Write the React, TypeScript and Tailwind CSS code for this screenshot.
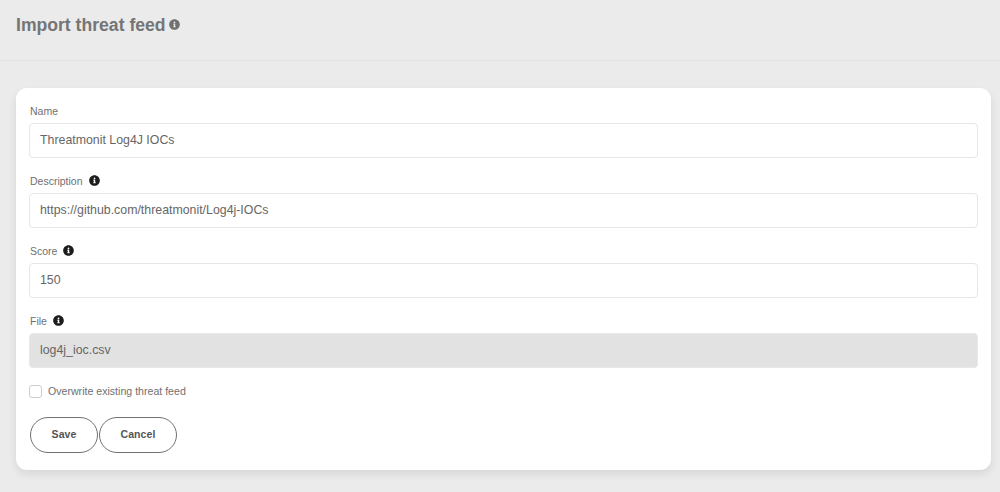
import React, { useState } from 'react';
import { FaInfoCircle } from 'react-icons/fa';

interface FieldProps {
  id: string;
  label: string;
  value: string;
  onChange?: (value: string) => void;
  info?: boolean;
  disabled?: boolean;
}

function Field({ id, label, value, onChange, info, disabled }: FieldProps) {
  return (
    <div className="mb-[13px]">
      <div className="flex h-[22px] items-center gap-[6px] pb-[2px] pl-px">
        <label htmlFor={id} className="text-[10.5px] leading-none text-[#707070]">
          {label}
        </label>
        {info && <FaInfoCircle className="mb-[2px] size-[11px] text-[#1c1c1c]" />}
      </div>
      <input
        id={id}
        type="text"
        value={value}
        disabled={disabled}
        onChange={(e) => onChange?.(e.target.value)}
        className="block h-[35px] w-full rounded-[4px] border border-[#e6e6e6] bg-white px-[10px] pb-[2px] text-[12.35px] text-[#666] outline-none disabled:border-[#e8e8e8] disabled:bg-[#e2e2e2]"
      />
    </div>
  );
}

const buttonClass =
  'h-[36px] rounded-full border border-[#74706c] bg-white text-[10.5px] font-bold tracking-[0.1px] text-[#555]';

export default function App() {
  const [name, setName] = useState('Threatmonit Log4J IOCs');
  const [description, setDescription] = useState('https://github.com/threatmonit/Log4j-IOCs');
  const [score, setScore] = useState('150');
  const [overwrite, setOverwrite] = useState(false);

  return (
    <div className="h-screen overflow-hidden bg-[#ebebeb] font-['Liberation_Sans',Arial,sans-serif]">
      <header className="flex h-[61px] items-center gap-[3px] border-b border-[#e1e1e1] px-4 pb-[11px]">
        <h1 className="pt-[2px] text-[17.6px] leading-none font-bold text-[#757575]">Import threat feed</h1>
        <FaInfoCircle className="size-[11px] text-[#707070]" />
      </header>

      <main className="pt-[27px] pr-[9px] pl-4">
        <form
          onSubmit={(e) => e.preventDefault()}
          className="h-[382px] rounded-[11px] bg-white pt-[13px] pr-[13px] pl-[13px] shadow-[0_4px_9px_rgba(0,0,0,0.09)]"
        >
          <Field id="name" label="Name" value={name} onChange={setName} />
          <Field id="description" label="Description" value={description} onChange={setDescription} info />
          <Field id="score" label="Score" value={score} onChange={setScore} info />
          <Field id="file" label="File" value="log4j_ioc.csv" info disabled />

          <label className="mt-[17px] flex h-[13px] items-center gap-[6px] text-[10.6px] leading-none text-[#707070]">
            <input
              type="checkbox"
              checked={overwrite}
              onChange={(e) => setOverwrite(e.target.checked)}
              className="size-[13px] appearance-none rounded-[3px] border border-[#c9cdd3] bg-white checked:bg-[#555]"
            />
            Overwrite existing threat feed
          </label>

          <div className="mt-[19px] ml-px flex gap-[1px]">
            <button type="submit" className={`${buttonClass} w-[68px]`}>
              Save
            </button>
            <button type="button" className={`${buttonClass} w-[78px]`}>
              Cancel
            </button>
          </div>
        </form>
      </main>
    </div>
  );
}
